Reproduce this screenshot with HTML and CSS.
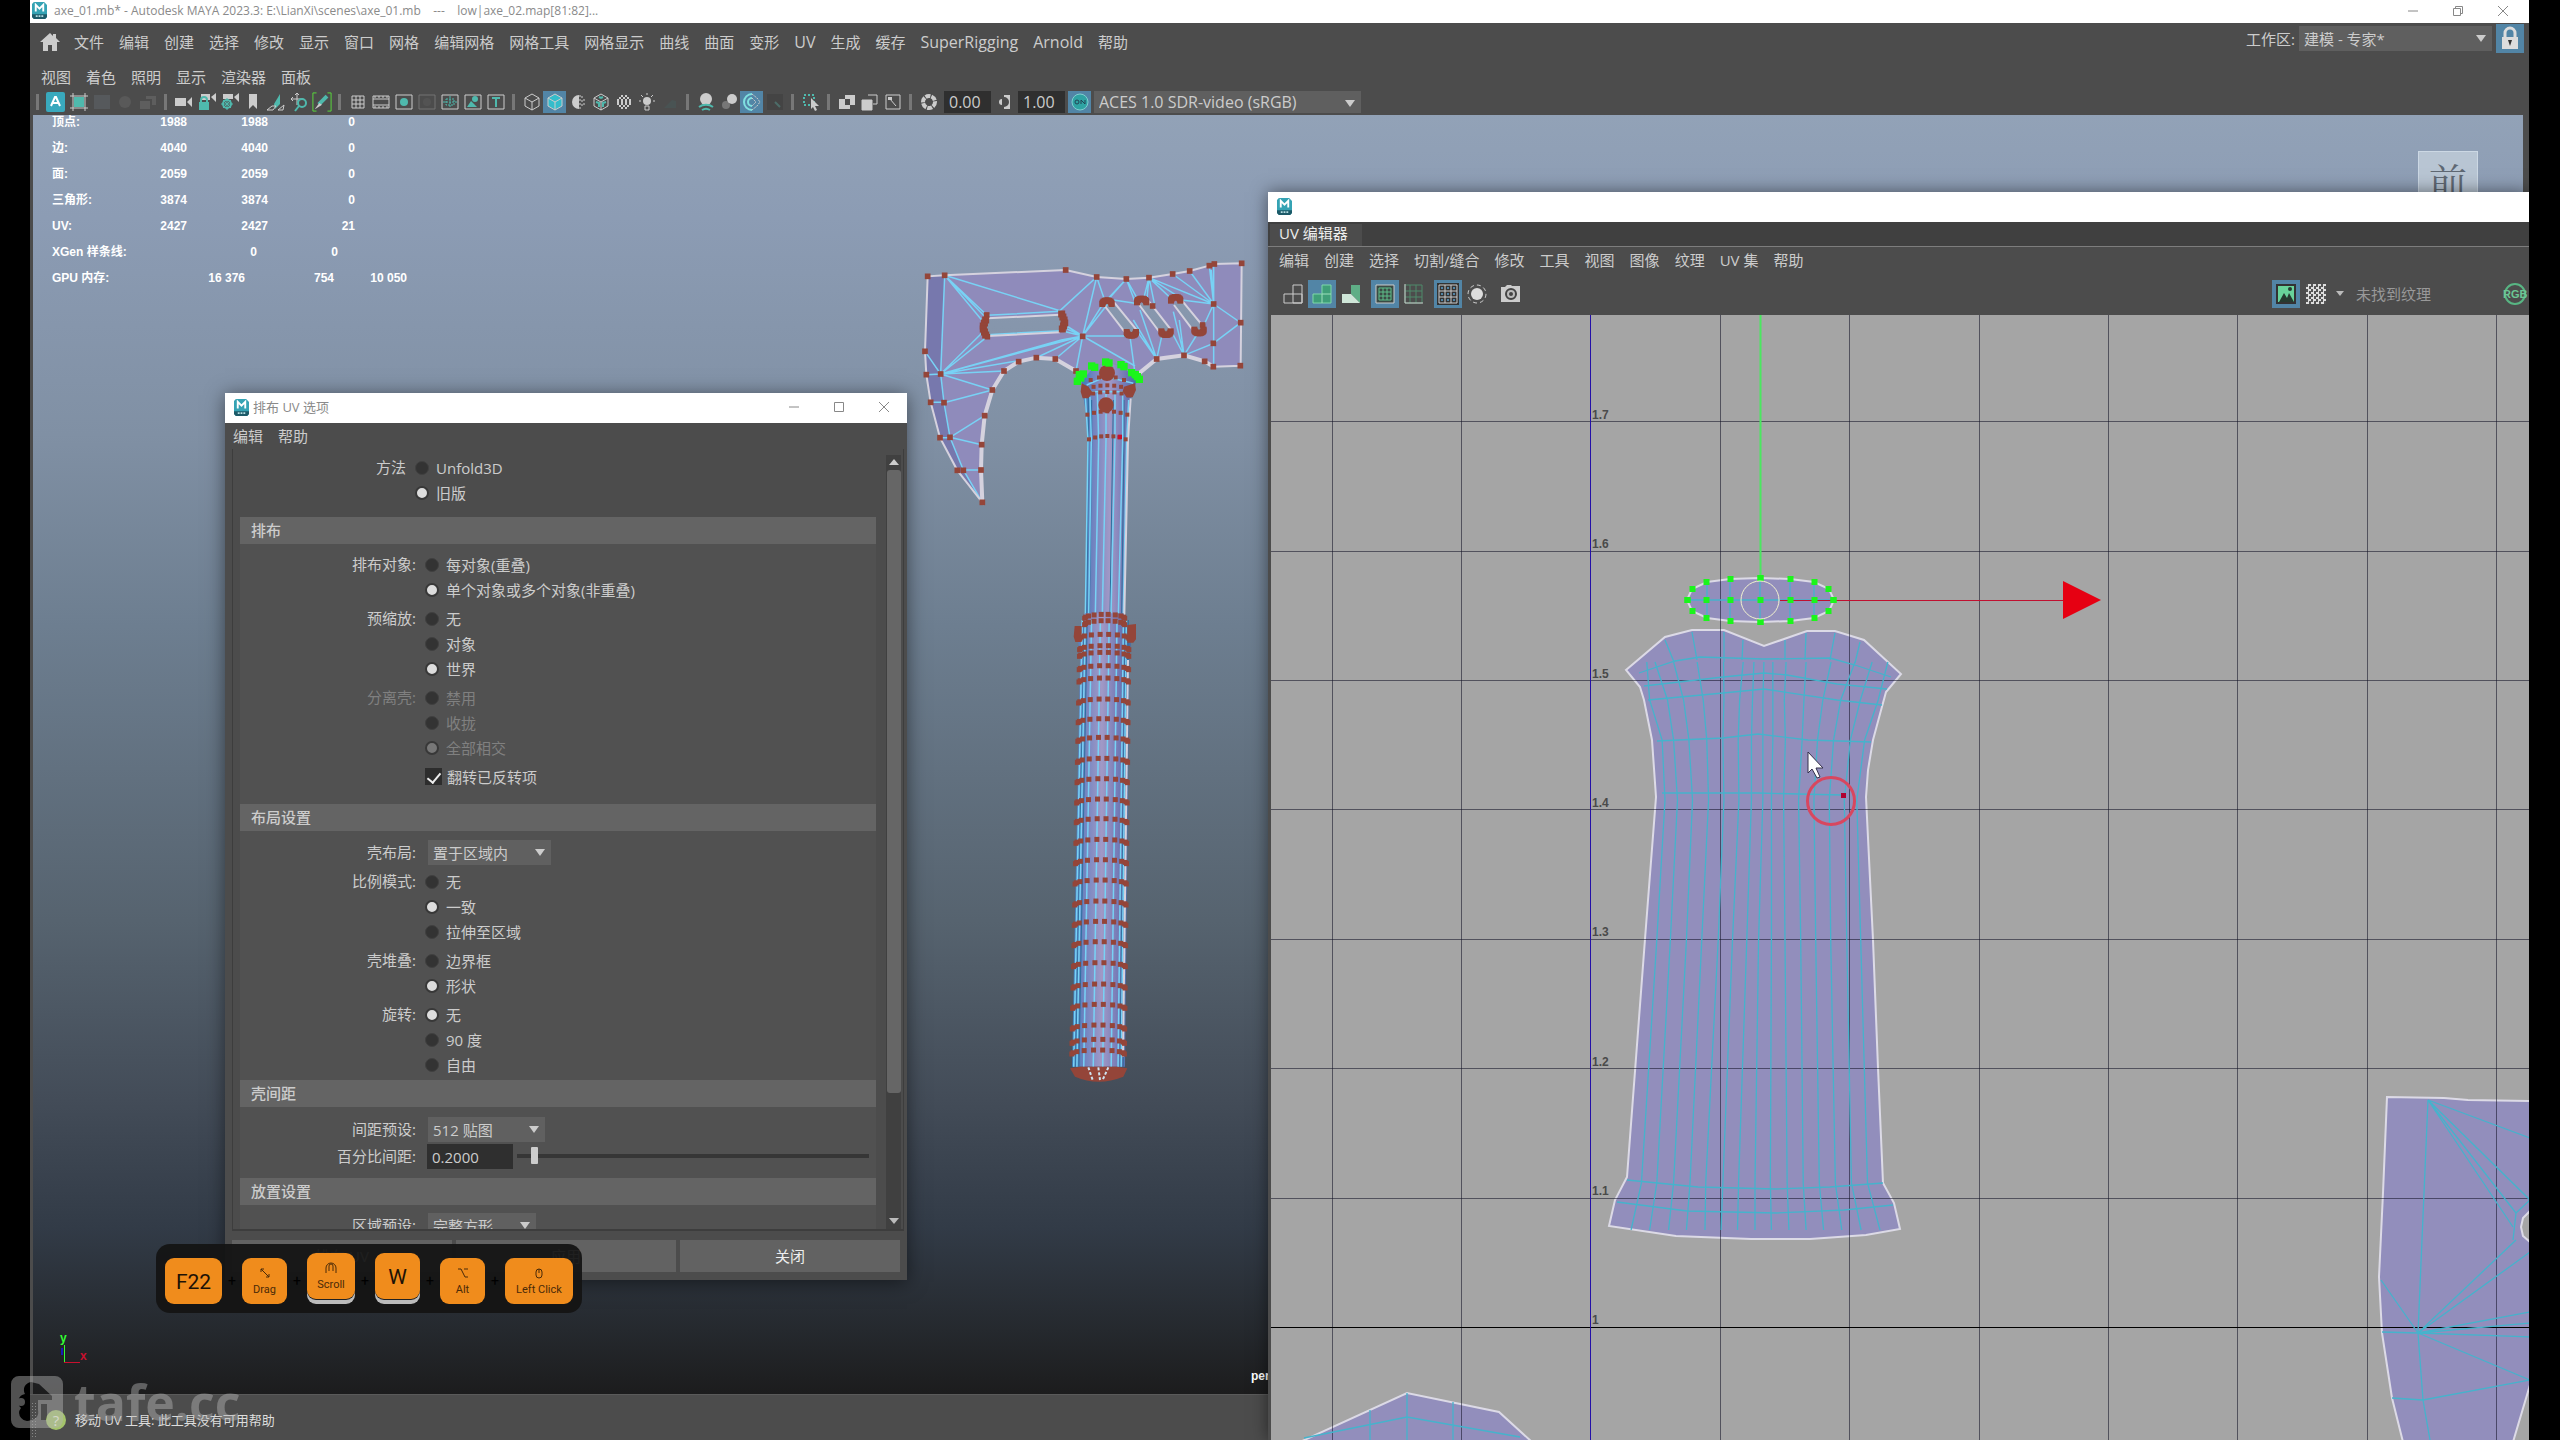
FILE: index.html
```
<!DOCTYPE html>
<html lang="zh-CN">
<head>
    <meta charset="UTF-8">
    <meta name="viewport" content="width=device-width, initial-scale=1.0">
    <title>axe_01.mb* - Autodesk MAYA 2023.3</title>
    <link rel="stylesheet" href="styles.css">
</head>
<body>
    <svg class="defs" aria-hidden="true">
        <symbol id="maya" viewBox="0 0 16 18">
            <path d="M2 0h11l3 3v13l-2 2H2l-2-2V2z" fill="#35a3b4"/>
            <path d="M0 13h16v3l-2 2H2l-2-2z" fill="#1d5a68"/>
            <path d="M4 10V3l4 4 4-4v7" fill="none" stroke="#fff" stroke-width="2"/>
            <path d="M4 15h2m1 0h2m1 0h2" stroke="#b5dde2" stroke-width="2"/>
        </symbol>
    </svg>

    <div class="app">
        <header class="titlebar">
            <svg class="app-icon"><use href="#maya"/></svg>
            <span class="title-text">axe_01.mb* - Autodesk MAYA 2023.3: E:\LianXi\scenes\axe_01.mb &nbsp;&nbsp; --- &nbsp;&nbsp; low|axe_02.map[81:82]...</span>
            <div class="win-buttons">
                <button aria-label="最小化"><svg viewBox="0 0 12 12"><path d="M1 6h10"/></svg></button>
                <button aria-label="还原"><svg viewBox="0 0 12 12"><path d="M1.5 3.5h7v7h-7zM3.500 3.500v-2h7v7h-2"/></svg></button>
                <button aria-label="关闭"><svg viewBox="0 0 12 12"><path d="M1 1l10 10M11 1L1 11"/></svg></button>
            </div>
        </header>

        <div class="menubar">
            <button class="home" aria-label="主页"><svg viewBox="0 0 20 18"><path d="M10 0L0 9h3v9h5v-6h4v6h5V9h3l-4-4V1h-3v2z" fill="#ccc"/></svg></button>
            <nav class="menu">
                <a href="#">文件</a><a href="#">编辑</a><a href="#">创建</a><a href="#">选择</a><a href="#">修改</a><a href="#">显示</a><a href="#">窗口</a><a href="#">网格</a><a href="#">编辑网格</a><a href="#">网格工具</a><a href="#">网格显示</a><a href="#">曲线</a><a href="#">曲面</a><a href="#">变形</a><a class="latin" href="#">UV</a><a href="#">生成</a><a href="#">缓存</a><a class="latin" href="#">SuperRigging</a><a class="latin" href="#">Arnold</a><a href="#">帮助</a>
            </nav>
            <div class="workspace">
                <label for="workspace">工作区:</label>
                <span class="select"><select id="workspace"><option>建模 - 专家*</option></select></span>
                <button class="lock" aria-label="锁定"><svg viewBox="0 0 28 29"><path d="M9 13V9a5 5 0 0 1 10 0v4" fill="none" stroke="#ddd" stroke-width="3"/><path d="M6 13h16v12H6z" fill="#ddd"/><path d="M12 16h4l-2 6z" fill="#333"/></svg></button>
            </div>
        </div>

        <nav class="menu panel-menu">
            <a href="#">视图</a><a href="#">着色</a><a href="#">照明</a><a href="#">显示</a><a href="#">渲染器</a><a href="#">面板</a>
        </nav>

        <div class="toolbar">
            <i class="sep"></i>
            <button aria-label="Arnold"><svg viewBox="0 0 20 20"><rect width="19" height="20" rx="2" fill="#39a9bd"/><path d="M5 14l4-9h1l4 9M7 11h5" class="w2"/></svg></button>
            <button aria-label="框架"><svg viewBox="0 0 20 20"><path d="M5 5h10v10H5z" class="t"/><path d="M1 4h18M1 16h18M4 1v18M16 1v18" class="w"/></svg></button>
            <button class="dim" aria-label="色块"><svg viewBox="0 0 20 20"><path d="M2 3h16v14H2z" fill="#6d7882"/></svg></button>
            <button class="dim" aria-label="圆"><svg viewBox="0 0 20 20"><circle cx="10" cy="10" r="6" fill="#777"/></svg></button>
            <button class="dim" aria-label="图层"><svg viewBox="0 0 20 20"><path d="M2 9h10v8H2zM8 4h10v9h-4V7H8z" fill="#888"/></svg></button>
            <i class="sep"></i>
            <button aria-label="摄影机"><svg viewBox="0 0 20 20"><path d="M1 6h11v8H1zM13 10l5-5v10z" class="wf"/></svg></button>
            <button aria-label="锁定摄影机"><svg viewBox="0 0 20 20"><path d="M4 2h9v6H4zM14 5l5-4v9z" class="wf"/><path d="M4 10V8a3 3 0 0 1 6 0v2" class="tl"/><path d="M2 10h10v8H2z" class="t"/></svg></button>
            <button aria-label="摄影机属性"><svg viewBox="0 0 20 20"><path d="M3 2h10v5H3zM14 5l5-4v9z" class="wf"/><circle cx="7" cy="12" r="4" class="tl"/><path d="M7 6v12M1 12h12M3 8l8 8M11 8l-8 8" class="tl thin"/></svg></button>
            <button aria-label="书签"><svg viewBox="0 0 20 20"><path d="M6 2h8v15l-4-4-4 4z" class="wf"/></svg></button>
            <button aria-label="图像平面"><svg viewBox="0 0 20 20"><path d="M8 12L14 2v10l-5 5z" class="t"/><path d="M1 18l5-4h4l-3 4zM12 18h5l1-5z" class="w thin"/></svg></button>
            <button aria-label="平移缩放"><svg viewBox="0 0 20 20"><path d="M8 1v12M2 7h12M6 3l2-2 2 2M4 5L2 7l2 2" class="w"/><circle cx="13" cy="11" r="4" class="tl"/><path d="M10 14l-4 5" class="tl"/></svg></button>
            <button aria-label="油性铅笔"><svg viewBox="0 0 22 22"><path d="M5 1H1v20h4M17 1h4v20h-4" fill="none" stroke="#5be33a"/><path d="M15 3l3 3-9 9-3-3z" class="t"/><path d="M8 12l3 2-6 4-2 1z" class="wf"/></svg></button>
            <i class="sep"></i>
            <button aria-label="栅格"><svg viewBox="0 0 20 20"><path d="M4 4h12v12H4zM8 4v12M12 4v12M4 8h12M4 12h12" class="w"/></svg></button>
            <button aria-label="胶片门"><svg viewBox="0 0 20 20"><path d="M2 4h16v12H2zM2 7h16M2 13h16" class="w"/><path d="M3 5h14M3 15h14" class="w" stroke-dasharray="2 2"/></svg></button>
            <button aria-label="分辨率门"><svg viewBox="0 0 20 20"><path d="M2 3h16v14H2z" class="w"/><circle cx="10" cy="10" r="4" class="t"/></svg></button>
            <button class="dim" aria-label="门遮罩"><svg viewBox="0 0 20 20"><path d="M2 3h16v14H2z" class="w"/><circle cx="10" cy="10" r="4" fill="#666"/></svg></button>
            <button aria-label="区域图"><svg viewBox="0 0 20 20"><path d="M2 3h16v14H2z" class="w"/><path d="M10 4v12M3 10h14M6 7h8v6H6z" class="tl thin" stroke-dasharray="2 1"/></svg></button>
            <button aria-label="安全动作"><svg viewBox="0 0 20 20"><path d="M2 3h16v14H2z" class="w"/><path d="M4 15l4-6 6 6z" class="t"/><circle cx="12" cy="7" r="3" class="t"/></svg></button>
            <button aria-label="安全标题"><svg viewBox="0 0 20 20"><path d="M2 3h16v14H2z" class="w"/><path d="M6 6h8M10 6v9" fill="none" stroke="#4fb9ad" stroke-width="2"/></svg></button>
            <i class="sep"></i>
            <button aria-label="线框"><svg viewBox="0 0 20 20"><path d="M10 2l7 4v8l-7 4-7-4V6zM3 6l7 4 7-4M10 10v8" class="w"/></svg></button>
            <button class="on" aria-label="着色"><svg viewBox="0 0 20 20"><path d="M10 2l7 4v8l-7 4-7-4V6z" fill="#35bccb"/><path d="M3 6l7 4 7-4M10 10v8M10 2l7 4v8l-7 4-7-4V6z" class="w"/></svg></button>
            <button aria-label="默认材质"><svg viewBox="0 0 20 20"><path d="M11 3a7 7 0 0 0 0 14z" class="wf"/><path d="M12 3v14M14 4v12M16 7v7" class="w" stroke-dasharray="2 2"/></svg></button>
            <button aria-label="带纹理线框"><svg viewBox="0 0 20 20"><path d="M10 2l7 4v8l-7 4-7-4V6zM3 6l7 4 7-4M10 10v8" class="w"/><path d="M5 10l3 1v4M15 10l-3 1v4M8 5l2 1 2-1" class="tl"/></svg></button>
            <button aria-label="纹理"><svg viewBox="0 0 20 20"><path d="M7 4h6M5 6h10M3 8h14M3 10h14M3 12h14M5 14h10M7 16h6" fill="none" stroke="#ccc" stroke-width="2" stroke-dasharray="2 2"/></svg></button>
            <button aria-label="灯光"><svg viewBox="0 0 20 20"><circle cx="10" cy="9" r="4" class="wf"/><path d="M8 14h4v4H8zM10 1v2M2 9h2M16 9h2M4 3l2 2M16 3l-2 2" class="w"/></svg></button>
            <button class="dim" aria-label="阴影"><svg viewBox="0 0 20 20"><path d="M4 16l8-8 4 1v7z" fill="#466"/></svg></button>
            <i class="sep"></i>
            <button aria-label="环境光遮挡"><svg viewBox="0 0 20 20"><circle cx="10" cy="7" r="6" class="wf"/><path d="M3 15c4-3 10-3 14 0M6 18c3-2 5-2 8 0" class="tl"/></svg></button>
            <button aria-label="运动模糊"><svg viewBox="0 0 20 20"><circle cx="7" cy="13" r="4" fill="#777"/><circle cx="13" cy="7" r="5" class="wf"/></svg></button>
            <button class="on" aria-label="抗锯齿"><svg viewBox="0 0 20 20"><path d="M10 2a8 8 0 0 0 0 16M10 6a4 4 0 0 0 0 8" fill="none" stroke="#7fe0e0" stroke-width="2"/><path d="M10 2l5 4 3 4-3 4-5 4M10 6l4 4-4 4" class="w" stroke-dasharray="2 1"/></svg></button>
            <button class="dim" aria-label="景深"><svg viewBox="0 0 20 20"><path d="M2 2h16v16H2z" fill="#333"/><path d="M10 10l5 5" class="tl"/></svg></button>
            <i class="sep"></i>
            <button aria-label="隔离选择"><svg viewBox="0 0 20 20"><path d="M3 3h10v10H3z" class="tl" stroke-dasharray="2 2"/><path d="M10 6l8 8-4 0 2 4-2 1-2-4-2 2z" class="wf"/></svg></button>
            <i class="sep"></i>
            <button aria-label="X 射线"><svg viewBox="0 0 20 20"><path d="M8 3h10v10h-5v4H2V7h6z" class="wf"/><path d="M8 7h5v6H8z" fill="#4c4c4c"/></svg></button>
            <button aria-label="X 射线关节"><svg viewBox="0 0 20 20"><path d="M8 3h9v9h-4M2 8h10v10H2z" class="w"/><path d="M2 8h10v10H2z" class="wf"/></svg></button>
            <button aria-label="X 射线组件"><svg viewBox="0 0 20 20"><path d="M3 3h14v14H3zM7 7l6 7" class="w"/><path d="M5 5h4v3H5z" class="wf"/></svg></button>
            <i class="sep"></i>
            <button aria-label="曝光"><svg viewBox="0 0 20 20"><circle cx="10" cy="10" r="6" fill="none" stroke="#ccc" stroke-width="4" stroke-dasharray="5 1"/></svg></button>
            <input class="num" aria-label="曝光值" value="0.00">
            <button class="wide" aria-label="Gamma"><svg viewBox="0 0 20 20"><path d="M9 3h6v14H9v-2a5 5 0 0 0 0-10z" class="wf"/><path d="M7 7a3 3 0 0 0 0 6z" class="wf"/></svg></button>
            <input class="num" aria-label="Gamma 值" value="1.00">
            <button class="on cm" aria-label="颜色管理"><svg viewBox="0 0 20 20"><circle cx="10" cy="10" r="8" fill="#2fa3a3" stroke="#7fd0d0"/><circle cx="7" cy="10" r="2" fill="none" stroke="#245"/><path d="M11 12V8l4 4V8" fill="none" stroke="#245"/></svg></button>
            <span class="select view-transform"><select aria-label="视图变换"><option>ACES 1.0 SDR-video (sRGB)</option></select></span>
        </div>

        <main class="viewport">
            <svg class="scene" viewBox="33 115 2490 1279" preserveAspectRatio="xMinYMin slice">
                <defs>
                    <linearGradient id="grip">
                        <stop offset="0" stop-color="#3c7cb8"/><stop offset=".2" stop-color="#6f83c0"/>
                        <stop offset=".5" stop-color="#a199c6"/><stop offset=".8" stop-color="#7077b4"/><stop offset="1" stop-color="#3c6ba8"/>
                    </linearGradient>
                </defs>
                <g class="axe" transform="translate(900 240) scale(.33333)">
                    <path class="skin" fill-rule="evenodd" d="M83 109L134 106L497 90L590 111L679 117L747 113L818 102L869 93L928 77L941 72L1025 70L1022 377L940 380L914 364L852 346L770 357L705 410L665 376L622 366L580 378L540 410L528 393L466 357L409 353L356 365L312 393L277 450L254 527L245 614L243 690L247 787L172 691L120 593L92 487L79 404L75 334ZM258 235L243 262L262 288L484 275L500 245L480 222ZM608 195L685 292L714 280L638 182ZM714 195L785 288L812 268L740 180ZM818 195L886 282L912 262L840 178Z"/>
                    <path class="shade" d="M83 109L134 106L122 402L150 592L190 690L247 787L172 691L120 593L92 487L79 404L75 334Z"/>
                    <path class="edge" d="M134 106V108L122 402L132 488L150 592L190 690L247 787M134 106L480 212M134 106L260 225M134 106L245 240M134 106L255 230M122 402L245 280M122 402L262 290M122 402L548 288M122 402L484 300L548 288M122 402L312 393M122 402L409 353L548 288M122 402L277 450M132 488L277 450M150 592L254 527M150 592L245 614M190 690H243M75 334L122 402L79 404M92 487H132M120 593H150M262 226L480 214M262 284L484 272L548 288L500 258M548 288L490 262M466 357L548 288L528 393M480 212L590 111L548 288L610 190M548 288L625 190M548 288H690M548 288L705 378M590 111L612 175M679 117L620 180M679 117L610 195M679 117L720 190M679 117L705 185M747 113L730 180M747 113L740 185M747 113L765 200M747 113L818 180M747 113L835 170M747 113L941 192M818 102L941 192M869 93L941 192M928 77L941 192M941 72L941 380M934 90L941 192M941 192L1022 248L940 310L852 346M941 192L845 180M941 192L912 255M941 310L852 346L812 270M852 346L820 215M852 346L890 285M852 346L838 240M770 357L712 275M770 357L720 210M770 357L700 240M770 357L785 290M705 400L690 290M640 180L705 190"/>
                    <path class="hull" d="M540 410L528 393L466 357L409 353L356 365L312 393L277 450L254 527L245 614L243 690L247 787L172 691L120 593L92 487L79 404L75 334L83 109L134 106L497 90L590 111L679 117L747 113L818 102L869 93L928 77L941 72L1025 70L1022 377L940 380L914 364L852 346L770 357L705 410M262 235L480 224M262 288L480 277M612 195L685 290M638 182L714 275M718 195L785 285M745 182L812 268M822 195L886 280M846 182L912 262"/>
                    <path class="hull inner" d="M528 393L466 357L409 353L356 365L312 393L277 450L254 527L245 614L243 690L247 787M940 380L914 364L852 346L770 357L705 410"/>
                    <path fill="url(#grip)" d="M545 425L580 382L622 368L665 380L712 415L695 470L686 520L683 600L672 1130H556L562 600L558 520L550 470Z"/>
                    <path class="deep" d="M565 470V600L560 1125M575 480V600L568 1125M672 480V600L665 1125M640 480L630 1125"/>
                    <path class="edge" d="M556 470L564 600L556 1125M570 470L574 600L566 1125M592 460L596 600L586 1125M618 460V600L607 1125M645 460V600L633 1125M668 465V600L655 1125M686 480L680 600L670 1125M560 435L618 410L700 430M550 455H700"/>
                    <path class="hull" d="M692 475L684 600L673 1125"/>
                    <g id="axe-points"></g>
                </g>
                <g class="axe" id="grip-mesh" transform="translate(1040 600) scale(.33333)"></g>
                <path d="M64.500 1345v18" stroke="#3f3"/><path d="M64 1362.500h16" stroke="#c8102e"/><path d="M62 1348v7" stroke="#1a1ab8" stroke-width="2"/>
                <text class="axis-y" x="60" y="1342">y</text><text class="axis-x" x="80" y="1360">x</text>
                <text class="cam" x="1251" y="1380">persp</text>
            </svg>

            <table class="hud">
                <tr><th>顶点:</th><td>1988</td><td>1988</td><td>0</td></tr>
                <tr><th>边:</th><td>4040</td><td>4040</td><td>0</td></tr>
                <tr><th>面:</th><td>2059</td><td>2059</td><td>0</td></tr>
                <tr><th>三角形:</th><td>3874</td><td>3874</td><td>0</td></tr>
                <tr><th>UV:</th><td>2427</td><td>2427</td><td>21</td></tr>
                <tr class="hud-xgen"><th>XGen 样条线:</th><td>0</td><td>0</td></tr>
                <tr class="hud-gpu"><th>GPU 内存:</th><td>16 376</td><td>754</td><td>10 050</td></tr>
            </table>
            <div class="viewcube">前</div>
        </main>

        <footer class="helpline">
            <i class="grip"></i>
            <span class="help-icon">?</span>
            <span>移动 UV 工具: 此工具没有可用帮助</span>
        </footer>
    </div>

    <section class="uv-window">
        <header class="win-title"><svg class="app-icon"><use href="#maya"/></svg></header>
        <div class="tabs"><button class="tab">UV 编辑器</button></div>
        <nav class="menu uv-menu">
            <a href="#">编辑</a><a href="#">创建</a><a href="#">选择</a><a href="#">切割/缝合</a><a href="#">修改</a><a href="#">工具</a><a href="#">视图</a><a href="#">图像</a><a href="#">纹理</a><a href="#">UV 集</a><a href="#">帮助</a>
        </nav>
        <div class="uv-tools">
            <div class="tool-group">
                <button aria-label="线框"><svg viewBox="0 0 28 28"><path d="M5 14h18v9H5zM14 5h9v18h-9z" class="w"/></svg></button>
                <button class="on" aria-label="着色"><svg viewBox="0 0 28 28"><path d="M5 14h9V5h9v18H5z" fill="#3f9f78" stroke="#7fd8a8"/><path d="M14 14h9M14 14v9" stroke="#9fe0bd"/></svg></button>
                <button aria-label="扭曲"><svg viewBox="0 0 28 28"><path d="M14 5h9v18l-9-9z" fill="#5fae86"/><path d="M5 14h9l9 9H5z" fill="#cfe6d8"/></svg></button>
            </div>
            <div class="tool-group">
                <button class="on" aria-label="边界"><svg viewBox="0 0 28 28"><path d="M5 5h18v18H5z" fill="#3b4a45" stroke="#ccc"/><path d="M8 8h12v12H8zM12 8v12M16 8v12M8 12h12M8 16h12" fill="none" stroke="#5fbf8a"/></svg></button>
                <button aria-label="纹理边界"><svg viewBox="0 0 28 28"><path d="M5 5h17v18H5zM10 5v18M16 5v18M5 11h17M5 17h17" fill="none" stroke="#4f8a6a"/><path d="M5 4v19h18" class="w"/></svg></button>
            </div>
            <div class="tool-group">
                <button class="on" aria-label="栅格"><svg viewBox="0 0 28 28"><path d="M5 5h18v18H5zM11 5v18M17 5v18M5 11h18M5 17h18" fill="none" stroke="#333" stroke-width="4"/><path d="M5 5h18v18H5zM11 5v18M17 5v18M5 11h18M5 17h18" class="w"/></svg></button>
                <button aria-label="隔离"><svg viewBox="0 0 28 28"><circle cx="14" cy="14" r="6" fill="#ddd"/><circle cx="14" cy="14" r="9" class="w" stroke-dasharray="4 3"/></svg></button>
            </div>
            <div class="tool-group">
                <button aria-label="快照"><svg viewBox="0 0 28 28"><path d="M4 7h4l2-2h4l1 1h8v16H4z" class="wf"/><circle cx="14" cy="14" r="5" fill="#bbb" stroke="#444" stroke-width="2"/><circle cx="14" cy="14" r="2" fill="#444"/></svg></button>
            </div>
            <div class="texture-tools">
                <button class="on" aria-label="图像显示"><svg viewBox="0 0 28 28"><path d="M5 5h18v18H5z" fill="#68d39a" stroke="#333" stroke-width="2"/><path d="M7 22l5-9 3 5 2-5 5 9z" fill="#263b30"/><circle cx="18" cy="9" r="2" fill="#263b30"/></svg></button>
                <button aria-label="棋盘格"><svg class="checker" viewBox="0 0 20 20"></svg></button>
                <i class="arrow"></i>
                <span class="no-texture">未找到纹理</span>
                <button class="rgb" aria-label="RGB"><svg viewBox="0 0 28 28"><circle cx="14" cy="14" r="10" fill="none" stroke="#58b583" stroke-width="2"/><text x="2" y="18">RGB</text></svg></button>
            </div>
        </div>
        <svg class="uv-canvas" viewBox="1271 315 1258 1125" preserveAspectRatio="xMinYMin slice">
            <g class="shells">
                <path id="shell" d="M1626 670L1665 637L1692 630H1724L1764 646L1807 631L1835 631L1864 640L1901 674L1886 692L1880 714L1873 740L1868 770L1866 797L1873 940L1878 1068L1883 1183L1894 1203L1900 1229L1866 1235L1810 1239H1751L1676 1236L1609 1226L1615 1200L1627 1177L1645 939L1656 797L1652 740L1644 700L1640 687Z"/>
                <path d="M2387 1097L2444 1098L2468 1100L2530 1101V1211L2523 1218L2521 1227L2523 1236L2530 1242V1385L2513 1442H2403L2392 1398L2382 1333L2379 1277L2383 1193Z"/>
                <path d="M1300 1442L1407 1393L1499 1412L1532 1442Z"/>
                <path d="M1687 600L1692 589L1707 582L1730 579L1760 578L1790 579L1814 582L1829 589L1834 600L1829 611L1814 618L1790 621L1760 622L1730 621L1707 618L1692 611Z"/>
            </g>
            <path class="grid" d="M1332.500 315V1440M1461.500 315V1440M1720.500 315V1440M1849.500 315V1440M1979.500 315V1440M2108.500 315V1440M2237.500 315V1440M2367.500 315V1440M2496.500 315V1440M1271 421.500H2529M1271 551.500H2529M1271 680.500H2529M1271 809.500H2529M1271 939.500H2529M1271 1068.500H2529M1271 1198.500H2529"/>
            <path d="M1271 1327.500H2529" stroke="#000"/>
            <path d="M1590.500 315V1440" stroke="#2410a8"/>
            <g class="ticks">
                <text x="1592" y="419">1.7</text><text x="1592" y="548">1.6</text><text x="1592" y="678">1.5</text><text x="1592" y="807">1.4</text><text x="1592" y="936">1.3</text><text x="1592" y="1066">1.2</text><text x="1592" y="1195">1.1</text><text x="1592" y="1324">1</text>
            </g>
            <g class="wires" id="uv-wires">
                <path d="M1639 673L1675 661L1700 657L1764 659L1830 658L1855 665L1891 677M1644 686L1723 677L1764 673L1787 675L1837 684L1887 689M1648 700L1723 693L1764 689L1837 700L1882 705M1657 741L1723 738L1758 734L1808 740L1871 742M1662 793H1758L1841 795M1627 1180L1698 1187L1776 1189L1830 1187L1883 1183M1617 1202L1687 1211L1776 1213L1844 1210L1893 1205"/>
                <path d="M2428 1100L2530 1138M2428 1100L2530 1200M2428 1100L2516 1213L2513 1240M2428 1100L2513 1227M2428 1100L2418 1333L2423 1400L2430 1440M2530 1200L2516 1213M2418 1333L2516 1240M2418 1333L2530 1252M2418 1333L2530 1312M2418 1333L2530 1323M2418 1333L2530 1337M2418 1333L2530 1380L2423 1400L2392 1398M2418 1333L2382 1332M2418 1333L2381 1280"/>
                <path d="M1407 1393V1440M1370 1410V1440M1453 1402V1440M1304 1438L1407 1417L1520 1437"/>
                <path d="M1687 600H1834M1707 582V618M1730 579V621M1760 578V622M1790 579V621M1814 582V618"/>
            </g>
            <path d="M1760.500 315V578" stroke="#4be860" stroke-width="2"/>
            <path d="M1780 600.500H2063" stroke="#c01030"/>
            <path d="M2063 581v38l38-19z" fill="#e60012"/>
            <g id="uv-points"></g>
            <circle cx="1760" cy="600" r="19" fill="none" stroke="#f2f2cf"/>
            <path d="M1841 793h5v5h-5z" fill="#b00030"/>
            <circle cx="1831" cy="801" r="23.500" fill="none" stroke="#d8475f" stroke-width="3"/>
            <path d="M1808 752v21l4-4 5 9 3-1-4-9h7z" fill="#fff" stroke="#35304a"/>
        </svg>
    </section>

    <section class="dialog">
        <header class="win-title">
            <svg class="app-icon"><use href="#maya"/></svg>
            <span>排布 UV 选项</span>
            <div class="win-buttons">
                <button aria-label="最小化"><svg viewBox="0 0 12 12"><path d="M1 6h10"/></svg></button>
                <button aria-label="最大化"><svg viewBox="0 0 12 12"><path d="M1.500 1.500h9v9h-9z"/></svg></button>
                <button aria-label="关闭"><svg viewBox="0 0 12 12"><path d="M1 1l10 10M11 1L1 11"/></svg></button>
            </div>
        </header>
        <nav class="menu dialog-menu"><a href="#">编辑</a><a href="#">帮助</a></nav>
        <div class="dialog-body">
            <form class="options">
                <div class="opt method">
                    <span class="opt-label">方法</span>
                    <div class="choices">
                        <label><input type="radio" name="method">Unfold3D</label>
                        <label><input type="radio" name="method" checked>旧版</label>
                    </div>
                </div>

                <h2>排布</h2>
                <div class="group">
                    <div class="opt">
                        <span class="opt-label">排布对象:</span>
                        <div class="choices">
                            <label><input type="radio" name="objects">每对象(重叠)</label>
                            <label><input type="radio" name="objects" checked>单个对象或多个对象(非重叠)</label>
                        </div>
                    </div>
                    <div class="opt">
                        <span class="opt-label">预缩放:</span>
                        <div class="choices">
                            <label><input type="radio" name="prescale">无</label>
                            <label><input type="radio" name="prescale">对象</label>
                            <label><input type="radio" name="prescale" checked>世界</label>
                        </div>
                    </div>
                    <div class="opt off">
                        <span class="opt-label">分离壳:</span>
                        <div class="choices">
                            <label><input type="radio" name="separate" disabled>禁用</label>
                            <label><input type="radio" name="separate" disabled>收拢</label>
                            <label><input type="radio" name="separate" disabled checked>全部相交</label>
                        </div>
                    </div>
                    <div class="opt">
                        <span class="opt-label"></span>
                        <div class="choices"><label><input type="checkbox" checked>翻转已反转项</label></div>
                    </div>
                </div>

                <h2>布局设置</h2>
                <div class="group tight">
                    <div class="opt">
                        <label class="opt-label" for="shell-layout">壳布局:</label>
                        <span class="select"><select id="shell-layout"><option>置于区域内</option></select></span>
                    </div>
                    <div class="opt">
                        <span class="opt-label">比例模式:</span>
                        <div class="choices">
                            <label><input type="radio" name="scale">无</label>
                            <label><input type="radio" name="scale" checked>一致</label>
                            <label><input type="radio" name="scale">拉伸至区域</label>
                        </div>
                    </div>
                    <div class="opt">
                        <span class="opt-label">壳堆叠:</span>
                        <div class="choices">
                            <label><input type="radio" name="stack">边界框</label>
                            <label><input type="radio" name="stack" checked>形状</label>
                        </div>
                    </div>
                    <div class="opt">
                        <span class="opt-label">旋转:</span>
                        <div class="choices">
                            <label><input type="radio" name="rotate" checked>无</label>
                            <label><input type="radio" name="rotate">90 度</label>
                            <label><input type="radio" name="rotate">自由</label>
                        </div>
                    </div>
                </div>

                <h2>壳间距</h2>
                <div class="group spacing">
                    <div class="opt">
                        <label class="opt-label" for="spacing">间距预设:</label>
                        <span class="select"><select id="spacing"><option>512 贴图</option></select></span>
                    </div>
                    <div class="opt">
                        <label class="opt-label" for="percent">百分比间距:</label>
                        <input class="num percent" id="percent" value="0.2000">
                        <input type="range" aria-label="百分比间距" min="0" max="5" step="0.1" value="0.2">
                    </div>
                </div>

                <h2>放置设置</h2>
                <div class="group">
                    <div class="opt">
                        <label class="opt-label" for="region">区域预设:</label>
                        <span class="select"><select id="region"><option>完整方形</option></select></span>
                    </div>
                </div>
            </form>
            <div class="scrollbar"><i class="arrow up"></i><i class="thumb"></i><i class="arrow"></i></div>
        </div>
        <div class="dialog-buttons">
            <button>排布 UV</button><button>应用</button><button>关闭</button>
        </div>
    </section>

    <div class="keys">
        <kbd class="key big wide-key">F22</kbd><i>+</i>
        <kbd class="key"><svg viewBox="0 0 12 12"><path d="M2 2l8 8M2 5V2h3M10 7v3H7"/></svg>Drag</kbd><i>+</i>
        <kbd class="key scroll raised"><svg viewBox="0 0 12 12"><path d="M1 11V6a5 5 0 0 1 10 0v5M4 9V4a2 2 0 0 1 4 0v5"/></svg>Scroll</kbd><i>+</i>
        <kbd class="key big raised">W</kbd><i>+</i>
        <kbd class="key"><svg viewBox="0 0 12 12"><path d="M1 2h3l4 8h3M7 2h4"/></svg>Alt</kbd><i>+</i>
        <kbd class="key click"><svg viewBox="0 0 12 12"><path d="M3 5a3 3 0 0 1 6 0v3a3 3 0 0 1-6 0zM6 2v4"/></svg>Left Click</kbd>
    </div>

    <div class="watermark">
        <svg viewBox="0 0 52 52"><path fill-rule="evenodd" d="M8 0h36a8 8 0 0 1 8 8v36a8 8 0 0 1-8 8H8a8 8 0 0 1-8-8V8a8 8 0 0 1 8-8zM20 6a8 8 0 0 0-6 12a8 8 0 0 0-4 14a8 8 0 0 0 10 12c6-1 8-5 7-10V24h14v-4L28 8zM36 28v16h-6V28z"/><circle cx="10" cy="26" r="4"/></svg>
        <span>tafe.cc</span>
    </div>
    <script src="script.js"></script>
</body>
</html>
```
FILE: styles.css
```
* {
    box-sizing: border-box;
}
body {
    margin: 0;
    background: #000;
    color: #ccc;
    font: 15px/20px "Open Sans", "Noto Sans CJK SC", sans-serif;
    position: relative;
    height: 100vh;
    overflow: hidden;
}
button, input, select {
    font: inherit;
    color: inherit;
    border: 0;
    padding: 0;
    margin: 0;
    background: none;
}
a {
    color: inherit;
    text-decoration: none;
}
.defs {
    display: none;
}
.app {
    height: 100vh;
    margin: 0 31px 0 30px;
    background: #4c4c4c;
    display: flex;
    flex-direction: column;
}

/* title bars */
.titlebar, .win-title {
    display: flex;
    align-items: center;
    background: #fff;
    color: #8a8a8a;
}
.titlebar {
    height: 23px;
    padding: 0 4px 2px 2px;
    font-size: 12px;
    gap: 7px;
    flex: none;
}
.win-title {
    height: 30px;
    padding: 0 1px 2px 9px;
    font-size: 13px;
    gap: 4px;
    flex: none;
}
.app-icon {
    width: 15px;
    height: 17px;
}
.win-buttons {
    margin-left: auto;
    display: flex;
}
.win-buttons button {
    width: 45px;
    height: 20px;
    display: grid;
    place-items: center;
}
.win-buttons svg {
    width: 12px;
    height: 12px;
    fill: none;
    stroke: #888;
}

/* menus */
.menubar {
    display: flex;
    height: 40px;
    align-items: center;
    padding: 0 5px 2px 10px;
    flex: none;
}
.home {
    width: 20px;
    height: 18px;
    margin-right: 14px;
}
.home svg {
    display: block;
}
.menu {
    display: flex;
    align-items: center;
    gap: 15px;
    white-space: nowrap;
}
.latin {
    font-size: 16px;
}
.workspace {
    margin-left: auto;
    align-self: flex-start;
    padding-top: 1px;
    display: flex;
    align-items: center;
    gap: 4px;
}
.workspace .select {
    width: 193px;
}
.lock {
    width: 28px;
    height: 29px;
    background: #5285a6;
}
.lock svg {
    display: block;
}
.panel-menu {
    height: 28px;
    padding-left: 11px;
    flex: none;
}
.select {
    position: relative;
    display: block;
    height: 25px;
    background: #5f5f5f;
}
.select select {
    appearance: none;
    width: 100%;
    height: 100%;
    padding: 0 30px 0 5px;
}
.select::after {
    content: "";
    position: absolute;
    right: 6px;
    top: 9px;
    border: 5px solid transparent;
    border-top: 7px solid #ccc;
    border-bottom: 0;
    pointer-events: none;
}
.arrow {
    width: 0;
    border: 5px solid transparent;
    border-top: 6px solid #bbb;
    border-bottom: 0;
}
.arrow.up {
    border-top: 0;
    border-bottom: 6px solid #ccc;
}

/* viewport toolbar */
.toolbar {
    display: flex;
    align-items: center;
    height: 24px;
    padding: 0 0 2px 1px;
    flex: none;
}
.toolbar button {
    width: 23px;
    height: 22px;
    display: grid;
    place-items: center;
    flex: none;
}
.toolbar button svg {
    width: 20px;
    height: 20px;
}
.toolbar .wide {
    width: 27px;
}
.toolbar .cm {
    margin: 0 3px;
}
.sep {
    width: 13px;
    height: 16px;
    background: linear-gradient(#777, #777) center / 3px 100% no-repeat;
    flex: none;
}
.dim {
    opacity: .3;
}
.on {
    background: #5285a6;
}
.t {
    fill: #4fb9ad;
}
.tl {
    fill: none;
    stroke: #4fb9ad;
    stroke-width: 2;
}
.w {
    fill: none;
    stroke: #ccc;
}
.w2 {
    fill: none;
    stroke: #fff;
    stroke-width: 2;
}
.wf {
    fill: #ccc;
}
.thin {
    stroke-width: 1;
}
.num {
    width: 47px;
    height: 22px;
    padding-left: 5px;
    background: #2f2f2f;
}
.toolbar .num, .view-transform {
    font-size: 16px;
}
.toolbar > .num:first-of-type {
    margin-left: 4px;
}
.view-transform {
    width: 267px;
    height: 22px;
    flex: none;
}

/* 3d viewport */
.viewport {
    position: relative;
    flex: 1;
    min-height: 0;
    margin: 0 6px 0 3px;
    overflow: hidden;
    background: linear-gradient(#92a2b7 0, #8c9cb4 8%, #8090a4 25%, #6d7e90 40%, #56636f 63%, #434c58 77%, #323b47 87%, #25292e 95%, #1c1c1d 100%);
}
.scene {
    display: block;
    width: 100%;
    height: 100%;
}
.hud {
    position: absolute;
    left: 19px;
    top: -6px;
    color: #fff;
    font: bold 12px/26px "Liberation Sans", "Noto Sans CJK SC", sans-serif;
    border-collapse: collapse;
}
.hud tr {
    display: grid;
    grid-template-columns: 85px 50px 81px 87px;
    height: 26px;
}
.hud .hud-xgen {
    grid-template-columns: 155px 50px 81px;
}
.hud .hud-gpu {
    grid-template-columns: 143px 50px 89px 73px;
}
.hud th, .hud td {
    padding: 0;
    font-weight: bold;
    text-align: left;
    white-space: nowrap;
}
.hud td {
    text-align: right;
}
.viewcube {
    position: absolute;
    right: 45px;
    top: 36px;
    width: 60px;
    height: 60px;
    border: 1px solid #ccd8e4;
    background: #b8c5d3;
    color: #5f6873;
    font: 38px/56px "Noto Serif CJK SC", "Noto Sans CJK SC", serif;
    text-align: center;
}
.axe path, .axe rect {
    vector-effect: non-scaling-stroke;
}
.skin {
    fill: #8f8bbb;
}
.shade {
    fill: #7778ad;
}
.edge {
    fill: none;
    stroke: #78d2f5;
    stroke-width: 1.5px;
}
.deep {
    fill: none;
    stroke: #2c6f9f;
}
.hull {
    fill: none;
    stroke: #d5d2de;
    stroke-width: 2px;
}
.inner {
    stroke-width: 4px;
}
.pt {
    fill: #944539;
}
.sel {
    fill: #1bf51b;
}
.axis-y, .axis-x, .cam {
    font: bold 12px "Liberation Sans", sans-serif;
    fill: #fff;
}
.axis-y {
    fill: #3f3;
}
.axis-x {
    fill: #c8102e;
}

/* help line */
.helpline {
    height: 46px;
    padding: 4px 0 0 1px;
    border-top: 1px solid #5a5a5a;
    display: flex;
    align-items: center;
    font-size: 13px;
    color: #ddd;
    gap: 9px;
    flex: none;
}
.grip {
    width: 6px;
    height: 36px;
    background: radial-gradient(#888 1px, transparent 1px) 0 0 / 3px 3px;
}
.help-icon {
    width: 20px;
    height: 20px;
    border-radius: 50%;
    background: #a4c46b;
    color: #eef5dd;
    text-align: center;
    line-height: 20px;
    font-size: 15px;
}

/* uv editor */
.uv-window {
    position: absolute;
    left: 1268px;
    right: 31px;
    top: 192px;
    bottom: 0;
    display: flex;
    flex-direction: column;
    background: #4c4c4c;
    box-shadow: 0 0 16px rgba(0, 0, 0, .5);
}
.tabs {
    height: 25px;
    padding: 2px 0 0 2px;
    background: #404040;
    border-bottom: 1px solid #7d7d7d;
    flex: none;
}
.tab {
    display: block;
    width: 92px;
    height: 22px;
    padding: 0 0 3px 9px;
    text-align: left;
    background: #4c4c4c;
    color: #eee;
    line-height: 19px;
}
.uv-menu {
    height: 25px;
    padding-left: 11px;
    flex: none;
}
.uv-tools {
    display: flex;
    align-items: center;
    height: 43px;
    padding-left: 11px;
    gap: 6px;
    flex: none;
}
.tool-group {
    display: flex;
    gap: 1px;
}
.uv-tools button {
    width: 28px;
    height: 28px;
    flex: none;
}
.uv-tools svg {
    display: block;
    width: 28px;
    height: 28px;
}
.texture-tools {
    margin-left: auto;
    display: flex;
    align-items: center;
}
.uv-tools .checker {
    width: 20px;
    height: 20px;
    margin-left: 6px;
    background: conic-gradient(#ddd 25%, #555 0 50%, #ddd 0 75%, #555 0) 0 0 / 5px 5px;
}
.texture-tools .arrow {
    margin-left: 8px;
    margin-right: 12px;
    border-width: 5px 4px 0;
}
.no-texture {
    color: #999;
    margin-right: 70px;
}
.rgb text {
    font: bold 11px "Liberation Sans", sans-serif;
    fill: #6cc795;
}
.uv-canvas {
    display: block;
    flex: 1;
    min-height: 0;
    margin-left: 3px;
    background: #a5a5a5;
}
.shells path {
    fill: #928ebc;
    stroke: #dcdae6;
    stroke-width: 2;
}
.grid {
    stroke: rgba(15, 15, 35, .55);
}
.ticks text {
    font: bold 12px "Liberation Sans", sans-serif;
    fill: #4a4a4a;
}
.wires path {
    fill: none;
    stroke: #45b3cc;
    stroke-width: 1.3;
}

/* layout options dialog */
.dialog {
    position: absolute;
    left: 225px;
    top: 393px;
    width: 682px;
    height: 887px;
    display: flex;
    flex-direction: column;
    background: #4c4c4c;
    box-shadow: 0 2px 18px rgba(0, 0, 0, .5);
}
.dialog-menu {
    height: 26px;
    padding-left: 8px;
    flex: none;
}
.dialog-body {
    flex: 1;
    min-height: 0;
    margin: 0 3px 0 7px;
    padding-right: 2px;
    display: flex;
    gap: 10px;
    border: solid #3d3d3d;
    border-width: 0 1px 2px;
}
.options {
    flex: 1;
    min-width: 0;
    overflow: hidden;
    padding: 6px 0 0 7px;
}
.options h2 {
    margin: 0;
    height: 27px;
    padding-left: 11px;
    background: #646464;
    font-size: 15px;
    line-height: 26px;
    font-weight: 500;
}
.group {
    display: flex;
    flex-direction: column;
    gap: 4px;
    padding: 8px 0 15px;
    background: #515151;
}
.tight {
    padding: 9px 0 3px;
}
.spacing {
    gap: 2px;
    padding: 10px 0 9px;
}
.opt {
    display: flex;
}
.opt-label {
    width: 176px;
    line-height: 25px;
    text-align: right;
    flex: none;
}
.method {
    margin-bottom: 12px;
}
.method .opt-label {
    width: 166px;
}
.choices label {
    display: flex;
    align-items: center;
    height: 25px;
}
.choices {
    padding-left: 9px;
}
input[type="radio"] {
    appearance: none;
    width: 14px;
    height: 14px;
    margin-right: 7px;
    border-radius: 50%;
    background: #333;
    border: 1px solid #404040;
}
input[type="radio"]:checked {
    background: #ddd;
    border: 2px solid #383838;
}
.off {
    color: #808080;
}
.off input[type="radio"]:checked {
    background: #777;
}
input[type="checkbox"] {
    appearance: none;
    width: 17px;
    height: 17px;
    margin-right: 5px;
    background: #2d2d2d;
    display: grid;
    place-items: center;
}
input[type="checkbox"]:checked::after {
    content: "";
    width: 6px;
    height: 11px;
    border: solid #eee;
    border-width: 0 2px 2px 0;
    transform: rotate(40deg);
}
.opt .select {
    margin-left: 12px;
    background: #606060;
}
#shell-layout {
    width: 123px;
}
#spacing {
    width: 117px;
}
#region {
    width: 108px;
}
.opt .percent {
    width: 86px;
    height: 25px;
    margin-left: 11px;
    flex: none;
}
input[type="range"] {
    appearance: none;
    flex: 1;
    height: 23px;
    margin: 0 7px 0 4px;
    background: linear-gradient(#363636, #363636) center / 100% 4px no-repeat;
}
input[type="range"]::-webkit-slider-thumb {
    appearance: none;
    width: 7px;
    height: 17px;
    background: #ccc;
    border-radius: 1px;
}
.scrollbar {
    width: 15px;
    margin-top: 6px;
    padding: 0 0 5px;
    display: flex;
    flex-direction: column;
    align-items: center;
    gap: 5px;
    background: #404040;
}
.scrollbar .up {
    margin-top: 4px;
}
.thumb {
    width: 14px;
    flex: 0 0 81%;
    background: #666;
    border-radius: 3px;
    margin-bottom: auto;
}
.dialog-buttons {
    display: flex;
    gap: 4px;
    padding: 9px 7px 8px;
    flex: none;
}
.dialog-buttons button {
    flex: 1;
    height: 32px;
    background: #626262;
    color: #eee;
}

/* pressed keys */
.keys {
    position: absolute;
    left: 156px;
    top: 1244px;
    height: 69px;
    padding: 0 9px 9px;
    display: flex;
    align-items: flex-end;
    border-radius: 14px;
    background: rgba(20, 20, 20, .95);
    font-family: Roboto, sans-serif;
}
.keys i {
    width: 20px;
    color: #000;
    font: 14px/46px Roboto, sans-serif;
    text-align: center;
}
.key {
    width: 45px;
    height: 46px;
    padding-top: 2px;
    display: flex;
    flex-direction: column;
    align-items: center;
    justify-content: center;
    gap: 4px;
    border-radius: 9px;
    background: #f08c1c;
    color: #4a2a08;
    font: 11px/14px Roboto, sans-serif;
}
.key svg {
    width: 12px;
    height: 12px;
    fill: none;
    stroke: #4a2a08;
}
.big {
    font-size: 21px;
    line-height: 24px;
    color: #1d1206;
}
.wide-key {
    width: 57px;
}
.scroll {
    width: 48px;
}
.click {
    width: 68px;
}
.raised {
    margin-bottom: 5px;
    box-shadow: 0 1px #222, 0 5px #bbb;
}

.watermark {
    position: absolute;
    left: 11px;
    bottom: 12px;
    display: flex;
    align-items: center;
    gap: 11px;
    color: #b4b4b4;
    opacity: .45;
    font: bold 50px/52px "Open Sans", sans-serif;
    pointer-events: none;
}
.watermark svg {
    width: 52px;
    height: 52px;
    fill: #b4b4b4;
}
```
FILE: script.js
```
const NS = 'http://www.w3.org/2000/svg';

function add(parent, tag, attrs) {
    const el = document.createElementNS(NS, tag);
    for (const key in attrs) el.setAttribute(key, attrs[key]);
    parent.appendChild(el);
    return el;
}

function dot(parent, x, y, size, cls) {
    add(parent, 'rect', { x: x - size / 2, y: y - size / 2, width: size, height: size, class: cls });
}

// vertices of the axe head
const head = document.getElementById('axe-points');
[[83,109],[134,106],[497,90],[590,111],[679,117],[747,113],[818,102],[869,93],[928,77],[943,72],[1025,70],
 [1022,248],[1021,377],[940,380],[914,364],[852,346],[770,357],[528,393],[466,357],[409,353],[356,365],[312,393],
 [277,450],[254,527],[245,614],[243,690],[247,787],[172,691],[190,691],[120,593],[150,592],[92,487],[132,488],
 [79,404],[122,402],[75,334],[548,289],[941,192],[940,310],[260,225],[262,290],[758,198],[908,255]
].forEach(p => dot(head, p[0], p[1], 17, 'pt'));

// rounded slot ends
[[248,240,285],[495,222,272]].forEach(([x, y0, y1]) => {
    for (let y = y0; y <= y1; y += 9) dot(head, x + (x < 300 ? 1 : -1) * Math.abs(y - (y0 + y1) / 2) / 2.5, y, 21, 'pt');
});
[[621,188,1],[725,183,1],[827,178,1],[694,280,-1],[798,278,-1],[897,273,-1]].forEach(([x, y, up]) => {
    for (let a = 0; a <= 180; a += 20) {
        const r = a * Math.PI / 180;
        dot(head, x + 14 * Math.cos(r), y - up * 11 * Math.sin(r) + up * 4, 18, 'pt');
    }
});

// collar under the head
[[410,50,4],[436,62,6],[456,64,6],[514,60,6],[588,55,6]].forEach(([y, w, n]) => {
    for (let i = 0; i <= n; i++) {
        const t = i / n * 2 - 1;
        dot(head, 622 + w * t, y + 10 * t * t, 12, 'pt');
    }
});
add(head, 'circle', { cx: 621, cy: 399, r: 24, class: 'pt' });
add(head, 'circle', { cx: 618, cy: 495, r: 23, class: 'pt' });
add(head, 'path', { d: 'M545 430L565 440L578 458L565 475H548L542 455ZM672 440L705 430L708 450L698 472H680L668 455Z', class: 'pt' });
[[532,424],[542,414],[550,402],[538,404],[575,378],[584,382],[617,366],[627,369],[663,374],[672,380],[695,398],[706,404],[718,418],[712,410]]
    .forEach(p => dot(head, p[0], p[1], 22, 'sel'));
add(head, 'rect', { x: 653, y: 584, width: 13, height: 13, fill: '#c8102e' });

// grip
const grip = document.getElementById('grip-mesh');
const left = y => 120 - (y - 180) * 23 / 1190;
const right = y => 268 - (y - 180) * 13 / 1190;
add(grip, 'path', { d: 'M135 40H250L275 100L268 180L255 1400H96L120 180L112 100Z', fill: 'url(#grip)' });
[0.03, 0.09, 0.22, 0.4, 0.58, 0.74, 0.87, 0.93].forEach((t, i) => {
    const x0 = left(60) + (right(60) - left(60)) * t, x1 = left(1400) + (right(1400) - left(1400)) * t;
    add(grip, 'path', { d: `M${x0} 60L${x1} 1400`, class: 'edge' });
    if (i < 2 || i > 5) add(grip, 'path', { d: `M${x0 + 6} 60L${x1 + 6} 1400`, class: 'deep' });
});
add(grip, 'path', { d: 'M264 180L249 1370', class: 'hull' });
[43, 62, 103, 137, 157, 197, 234, 297, 356, 412, 475, 536, 597, 656, 718, 779, 840, 903, 964, 1025, 1088, 1152, 1213, 1275, 1318, 1350].forEach(y => {
    const mid = (left(y) + right(y)) / 2 - 2;
    const w = y < 70 ? 60 : (right(y) - left(y)) / 2;
    [-90, -72, -54, -32, -10, 10, 32, 54, 72, 90].forEach(deg => {
        const a = deg * Math.PI / 180;
        dot(grip, mid + w * Math.sin(a), y + 12 * (1 - Math.cos(a)), 15, 'pt');
    });
});
add(grip, 'path', { d: 'M104 78H125V126H106L101 110ZM262 75L288 72V118L280 128H262Z', class: 'pt' });
add(grip, 'path', { d: 'M90 1405L120 1400H230L262 1405L250 1430Q175 1460 105 1430Z', class: 'pt' });
add(grip, 'path', { d: 'M145 1402L158 1440M175 1402L180 1440M205 1402L188 1440', stroke: '#cfe4f0', 'stroke-width': 2, 'stroke-dasharray': '3 2' });

// long edges of the unfolded handle, one x list per height
const wires = document.getElementById('uv-wires');
const levels = [
    [662, [187, 210, 262, 328, 402, 457, 487, 515, 540, 577, 633, 703, 770, 818, 862]],
    [700, [195, 245, 290, 345, 403, 447, 483, 512, 540, 572, 627, 680, 730, 785, 835]],
    [740, [230, 262, 305, 355, 400, 443, 480, 512, 540, 575, 622, 665, 710, 757, 797]],
    [800, [238, 273, 315, 360, 403, 445, 480, 512, 536, 570, 612, 655, 698, 740, 775]],
    [940, [215, 253, 298, 341, 387, 427, 467, 500, 536, 574, 618, 660, 702, 747, 786]],
    [1183, [172, 215, 262, 308, 352, 400, 444, 490, 533, 580, 625, 670, 715, 760, 805]],
    [1230, [143, 195, 248, 298, 350, 395, 441, 490, 536, 585, 633, 682, 733, 787, 840]]
];
for (let i = 0; i < 15; i++) {
    add(wires, 'path', { d: 'M' + levels.map(([y, xs]) => `${1580 + xs[i] / 2.8} ${y}`).join('L') });
}
add(wires, 'path', { d: 'M1665 640L1674 662M1692 632L1697 660M1724 632V662M1806 633L1805 660M1835 633L1830 660M1860 642L1855 663M1785 640V660M1743 640L1742 660' });

// selected uvs
const pts = document.getElementById('uv-points');
[[0, 22], [30, 21], [54, 18], [68, 11], [73, 0]].forEach(([x, y]) => {
    [[x, y], [-x, y], [x, -y], [-x, -y]].forEach(p => dot(pts, 1760.5 + p[0], 600 + p[1], 6, 'sel'));
});
[-54, -30, 0, 30, 54].forEach(x => dot(pts, 1760.5 + x, 600, 6, 'sel'));
```
